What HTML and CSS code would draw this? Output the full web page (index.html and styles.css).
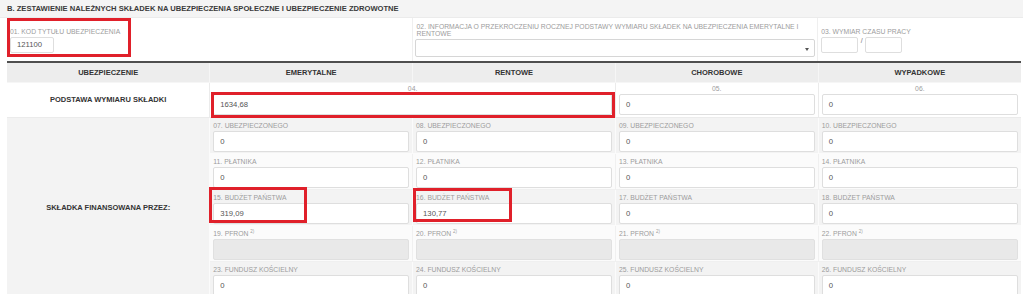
FILE: index.html
```html
<!DOCTYPE html>
<html lang="pl">
<head>
<meta charset="utf-8">
<title>B. Zestawienie należnych składek</title>
<link rel="stylesheet" href="styles.css">
</head>
<body>
<div class="section">
  <div class="section-title">B. ZESTAWIENIE NALEŻNYCH SKŁADEK NA UBEZPIECZENIA SPOŁECZNE I UBEZPIECZENIE ZDROWOTNE</div>
  <div class="sheet">
    <div class="top-row">
      <div class="top-cell span2">
        <div class="lbl">01. KOD TYTUŁU UBEZPIECZENIA</div>
        <div class="inp inp-small inp-code">121100</div>
      </div>
      <div class="top-cell span2 cell-info">
        <div class="lbl lbl-wrap">02. INFORMACJA O PRZEKROCZENIU ROCZNEJ PODSTAWY WYMIARU SKŁADEK NA UBEZPIECZENIA EMERYTALNE I RENTOWE</div>
        <div class="select"><span class="caret"></span></div>
      </div>
      <div class="top-cell">
        <div class="lbl">03. WYMIAR CZASU PRACY</div>
        <div class="time">
          <div class="inp inp-small inp-time"></div>
          <span class="slash">/</span>
          <div class="inp inp-small inp-time"></div>
        </div>
      </div>
    </div>

    <table class="grid">
      <colgroup><col><col><col><col><col></colgroup>
      <thead>
        <tr>
          <th>UBEZPIECZENIE</th>
          <th>EMERYTALNE</th>
          <th>RENTOWE</th>
          <th>CHOROBOWE</th>
          <th>WYPADKOWE</th>
        </tr>
      </thead>
      <tbody>
        <tr class="row-base">
          <th class="row-label">PODSTAWA WYMIARU SKŁADKI</th>
          <td colspan="2"><div class="lbl center">04.</div><div class="inp">1634,68</div></td>
          <td><div class="lbl center">05.</div><div class="inp">0</div></td>
          <td><div class="lbl center">06.</div><div class="inp">0</div></td>
        </tr>
        <tr class="stripe">
          <th class="row-label" rowspan="5">SKŁADKA FINANSOWANA PRZEZ:</th>
          <td><div class="lbl">07. UBEZPIECZONEGO</div><div class="inp">0</div></td>
          <td><div class="lbl">08. UBEZPIECZONEGO</div><div class="inp">0</div></td>
          <td><div class="lbl">09. UBEZPIECZONEGO</div><div class="inp">0</div></td>
          <td><div class="lbl">10. UBEZPIECZONEGO</div><div class="inp">0</div></td>
        </tr>
        <tr class="plain">
          <td><div class="lbl">11. PŁATNIKA</div><div class="inp">0</div></td>
          <td><div class="lbl">12. PŁATNIKA</div><div class="inp">0</div></td>
          <td><div class="lbl">13. PŁATNIKA</div><div class="inp">0</div></td>
          <td><div class="lbl">14. PŁATNIKA</div><div class="inp">0</div></td>
        </tr>
        <tr class="stripe">
          <td><div class="lbl">15. BUDŻET PAŃSTWA</div><div class="inp">319,09</div></td>
          <td><div class="lbl">16. BUDŻET PAŃSTWA</div><div class="inp">130,77</div></td>
          <td><div class="lbl">17. BUDŻET PAŃSTWA</div><div class="inp">0</div></td>
          <td><div class="lbl">18. BUDŻET PAŃSTWA</div><div class="inp">0</div></td>
        </tr>
        <tr class="plain">
          <td><div class="lbl">19. PFRON <sup>2)</sup></div><div class="inp disabled"></div></td>
          <td><div class="lbl">20. PFRON <sup>2)</sup></div><div class="inp disabled"></div></td>
          <td><div class="lbl">21. PFRON <sup>2)</sup></div><div class="inp disabled"></div></td>
          <td><div class="lbl">22. PFRON <sup>2)</sup></div><div class="inp disabled"></div></td>
        </tr>
        <tr class="stripe">
          <td><div class="lbl">23. FUNDUSZ KOŚCIELNY</div><div class="inp">0</div></td>
          <td><div class="lbl">24. FUNDUSZ KOŚCIELNY</div><div class="inp">0</div></td>
          <td><div class="lbl">25. FUNDUSZ KOŚCIELNY</div><div class="inp">0</div></td>
          <td><div class="lbl">26. FUNDUSZ KOŚCIELNY</div><div class="inp">0</div></td>
        </tr>
      </tbody>
    </table>

    <div class="mark mark-01"></div>
    <div class="mark mark-04"></div>
    <div class="mark mark-15"></div>
    <div class="mark mark-16"></div>
  </div>
</div>
</body>
</html>
```

FILE: styles.css
```css
* { box-sizing: border-box; }

html, body {
  margin: 0;
  padding: 0;
  background: #ffffff;
  font-family: "Liberation Sans", Arial, sans-serif;
  color: #333;
  overflow: hidden;
}

.section-title {
  height: 18px;
  line-height: 17px;
  padding-left: 7px;
  background: #f4f4f4;
  border-bottom: 1px solid #ebebeb;
  font-size: 7.6px;
  font-weight: bold;
  color: #3a3a3a;
  white-space: nowrap;
}

.sheet {
  position: relative;
  margin-left: 7px;
  width: 1014px;
}

/* top row */
.top-row {
  display: grid;
  grid-template-columns: repeat(5, 1fr);
  height: 43px;
  background: #fff;
}

.top-cell {
  display: flex;
  flex-direction: column;
  justify-content: center;
  padding: 0 3px;
}

.span2 { grid-column: span 2; border-right: 1px solid #efefef; }

.cell-info { padding: 0 2px; }

.lbl {
  font-size: 6.8px;
  line-height: 9px;
  color: #9c9c9c;
  white-space: nowrap;
}

.lbl sup {
  font-size: 4.5px;
  vertical-align: 3px;
  line-height: 0;
}

.lbl.center { text-align: center; }

.lbl-wrap {
  white-space: normal;
  line-height: 7.5px;
  padding-left: 2px;
  max-width: 392px;
  margin-bottom: 1px;
}

.select {
  position: relative;
  height: 18px;
  border: 1px solid #d6d6d6;
  border-radius: 2px;
  background: #fff;
}

.caret {
  position: absolute;
  right: 5px;
  top: 8px;
  width: 0;
  height: 0;
  border-left: 2.5px solid transparent;
  border-right: 2.5px solid transparent;
  border-top: 3px solid #555;
}

.time {
  display: flex;
  align-items: flex-start;
  gap: 0;
}

.slash {
  font-size: 7px;
  color: #777;
  width: 7px;
  text-align: center;
  line-height: 9px;
}

/* inputs */
.inp {
  height: 21px;
  margin-top: 1px;
  padding: 0 6px;
  border: 1px solid #dedede;
  border-radius: 2px;
  background: #fff;
  font-size: 7.7px;
  line-height: 19px;
  color: #555;
  white-space: nowrap;
}

.inp-small { height: 16px; line-height: 14px; }
.inp-code { width: 44px; padding-left: 6px; }
.inp-time { width: 37px; }

.inp.disabled {
  background: #e9e9e9;
  border-color: #e0e0e0;
}

/* table */
.grid {
  width: 1014px;
  table-layout: fixed;
  border-collapse: collapse;
  border-top: 2px solid #4f4f4f;
}

.grid th, .grid td {
  border: 1px solid #ebebeb;
}

.grid tr > *:first-child { border-left: 0; }
.grid tr > *:last-child { border-right: 0; }

.grid thead th {
  height: 20px;
  padding: 0;
  background: #ededed;
  font-size: 7.5px;
  font-weight: bold;
  color: #333;
  text-align: center;
  vertical-align: middle;
  border-top: 0;
  border-color: #f6f6f6;
}

.row-label {
  font-size: 7.5px;
  font-weight: bold;
  color: #333;
  text-align: center;
  vertical-align: middle;
}

.grid td {
  vertical-align: top;
  padding: 3px 3px 1px;
}

.row-base th, .row-base td { background: #fff; height: 35px; }
.row-base td { padding-top: 1px; }

.stripe th, .stripe td { background: #f3f3f3; height: 36px; }
.stripe th, .stripe td { border-color: #fbfbfb; }
.plain td { background: #fbfbfb; height: 36px; border-color: #f0f0f0; }

/* annotation marks drawn over the form */
.mark {
  position: absolute;
  border: 3px solid #e0202a;
  pointer-events: none;
}

.mark-01 { left: 0; top: 0; width: 124px; height: 39px; }
.mark-04 { left: 204px; top: 74px; width: 404px; height: 26px; }
.mark-15 { left: 202px; top: 169px; width: 98px; height: 36px; }
.mark-16 { left: 406px; top: 170px; width: 99px; height: 34px; }
```
